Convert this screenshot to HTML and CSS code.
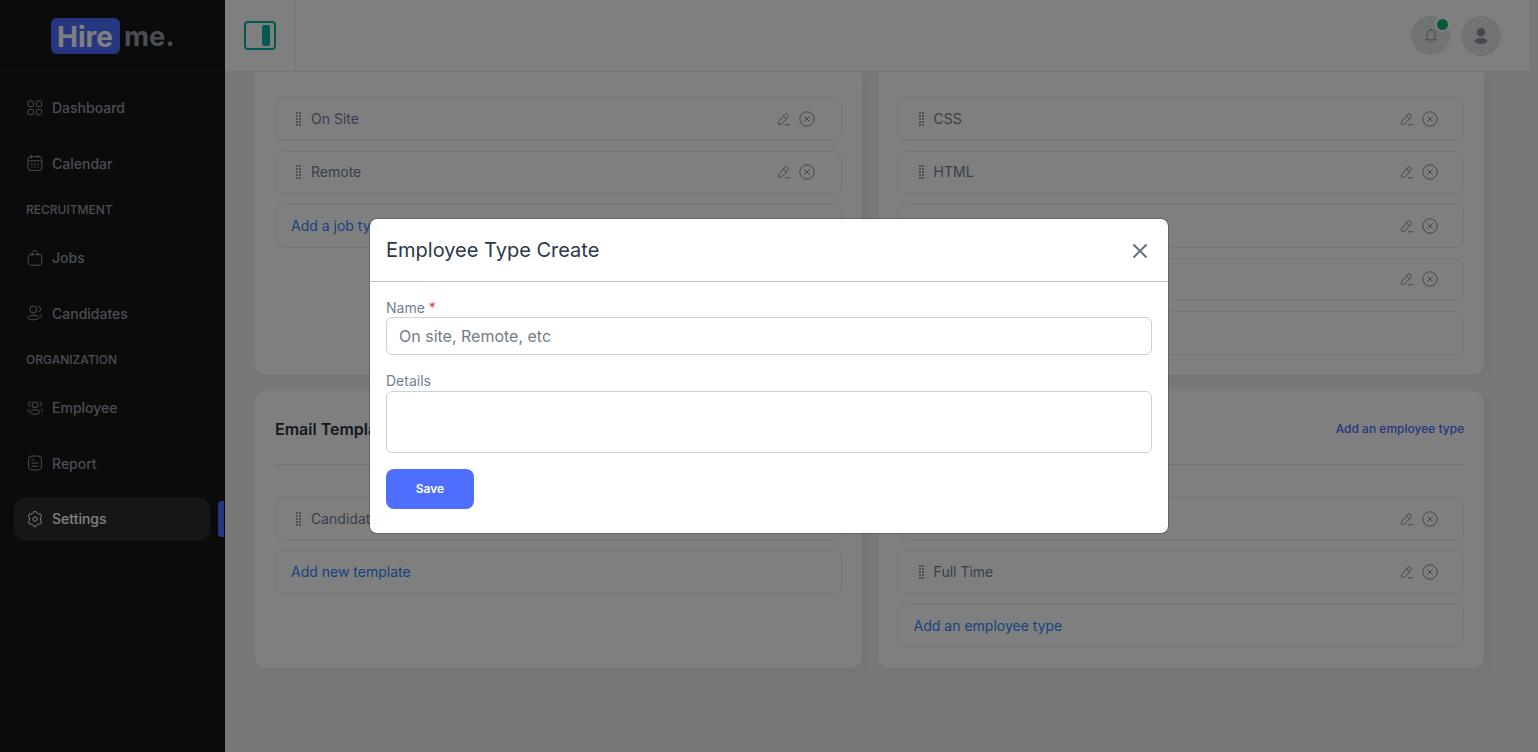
FILE: index.html
```html
<!DOCTYPE html>
<html lang="en">
<head>
<meta charset="utf-8">
<title>Hire me. - Settings</title>
<link rel="stylesheet" href="styles.css">
</head>
<body>
<svg class="sprite" aria-hidden="true">
  <symbol id="grip" viewBox="0 0 6 14"><path d="M0 0h2v2H0zM3 0h2v2H3zM0 3h2v2H0zM3 3h2v2H3zM0 6h2v2H0zM3 6h2v2H3zM0 9h2v2H0zM3 9h2v2H3zM0 12h2v2H0zM3 12h2v2H3z"/></symbol>
  <symbol id="edit" viewBox="0 0 14 14"><path d="M7.600 2.600 2.200 8.800c-.3.300-.5.800-.6 1.200l-.3 1.500c-.1.700.4 1.200 1.100 1.100l1.500-.3c.4-.1.900-.3 1.200-.6l5.600-6.200c.9-1.100.9-2.100-.1-3-1-.9-2.100-.9-3 .1zM6.700 3.700c.3 1.600 1.600 2.700 3.100 2.900M8 12.800h5"/></symbol>
  <symbol id="remove" viewBox="0 0 16 16"><circle cx="8" cy="8" r="7.200"/><path d="m5.200 5.200 5.600 5.600m0-5.600-5.600 5.600"/></symbol>
</svg>
<div class="app">
  <aside class="sidebar">
    <div class="brand"><span class="brand-box">Hire</span><span class="brand-rest">me.</span></div>
    <nav class="nav">
      <a class="nav-item"><svg viewBox="0 0 16 16"><rect x="1" y="1" width="5.400" height="5.400" rx="1.400"/><rect x="9.300" y="1" width="5.400" height="5.400" rx="1.400"/><rect x="1" y="9.300" width="5.400" height="5.400" rx="1.400"/><rect x="9.300" y="9.300" width="5.400" height="5.400" rx="1.400"/></svg>Dashboard</a>
      <a class="nav-item"><svg class="up" viewBox="0 0 16 16"><rect x="1" y="1.600" width="13.800" height="14" rx="3"/><path d="M1 5.800h13.600M4.600 0v3M11 0v3"/><path class="dots" d="M4 9.200h1.500M7 9.200h1.500M10 9.200h1.500M4 12h1.500M7 12h1.500M10 12h1.500"/></svg>Calendar</a>
      <div class="nav-label">RECRUITMENT</div>
      <a class="nav-item"><svg viewBox="0 0 16 16"><path d="M4.300 4.300h7.400c2 0 2.900 1.200 3 3l.2 4c.1 2.500-1 3.900-3.300 3.900H4.400c-2.300 0-3.400-1.400-3.300-3.900l.2-4c.1-1.800 1-3 3-3zM5 6V3.800C5 2 6.200.6 8 .6s3 1.400 3 3.200V6"/></svg>Jobs</a>
      <a class="nav-item"><svg class="up" viewBox="0 0 16 16"><circle cx="6.300" cy="4.500" r="3.500"/><ellipse cx="6.300" cy="12.500" rx="5.500" ry="2.300"/><path d="M11 1.400c3.300 0 3.300 5.200.4 5.400M13.300 10.100c2 .5 2 2.300.4 3.100"/></svg>Candidates</a>
      <div class="nav-label">ORGANIZATION</div>
      <a class="nav-item"><svg viewBox="0 0 16 16"><circle cx="8" cy="4.900" r="3"/><ellipse cx="8" cy="12" rx="4.800" ry="2.200"/><path d="M3.800 2.100C.9 1.700.7 6.200 3.600 6.400M12.200 2.100c2.900-.4 3.100 4.100.2 4.300M2 9c-1.700.5-1.800 2.300-.4 2.900M14 9c1.700.5 1.800 2.300.4 2.900"/></svg>Employee</a>
      <a class="nav-item"><svg class="up" viewBox="0 0 16 16"><rect x="1.500" y="1" width="13" height="14" rx="3.600"/><path d="M4.500 4.900H7M4.500 8.100h6.800M4.500 11.200h6.800"/></svg>Report</a>
      <a class="nav-item active"><svg viewBox="0 0 16 16"><path d="M6.900.6h2.200c.5 1.900 2.100 2.800 4.200 2.200l1.300 2.200c-1.500 1.300-1.500 4.700 0 6l-1.300 2.200c-2.100-.6-3.700.3-4.200 2.200H6.900c-.5-1.900-2.100-2.800-4.200-2.200L1.400 11c1.500-1.300 1.500-4.700 0-6l1.300-2.200c2.100.6 3.700-.3 4.200-2.200z" stroke-linejoin="round"/><circle cx="8" cy="8" r="2.200"/></svg>Settings</a>
    </nav>
  </aside>
  <div class="page">
    <header class="topbar">
      <button class="toggle" aria-label="Toggle sidebar"><span></span></button>
      <div class="user-tools">
        <div class="circle bell"><svg viewBox="0 0 14 16"><path d="M1.200 11.800h11.600M2.300 11.600c.7-1.200.7-2.500.7-5C3 3.700 4.500 2 7 2s4 1.700 4 4.600c0 2.500 0 3.800.7 5M7 .8V2"/><path class="solid" d="M5.600 13.200h2.800c0 1.500-2.800 1.500-2.800 0z"/></svg><i class="badge"></i></div>
        <div class="circle avatar"><svg viewBox="0 0 14 16"><circle cx="7" cy="4.300" r="4.200"/><ellipse cx="7" cy="13" rx="6.400" ry="2.900"/></svg></div>
      </div>
    </header>
    <main class="boards">
      <section class="card card-upper">
        <div class="row"><svg class="grip"><use href="#grip"/></svg><span>On Site</span><svg class="edit"><use href="#edit"/></svg><svg class="remove"><use href="#remove"/></svg></div>
        <div class="row"><svg class="grip"><use href="#grip"/></svg><span>Remote</span><svg class="edit"><use href="#edit"/></svg><svg class="remove"><use href="#remove"/></svg></div>
        <a class="row add">Add a job type</a>
      </section>
      <section class="card card-upper">
        <div class="row"><svg class="grip"><use href="#grip"/></svg><span>CSS</span><svg class="edit"><use href="#edit"/></svg><svg class="remove"><use href="#remove"/></svg></div>
        <div class="row"><svg class="grip"><use href="#grip"/></svg><span>HTML</span><svg class="edit"><use href="#edit"/></svg><svg class="remove"><use href="#remove"/></svg></div>
        <div class="row"><span></span><svg class="edit"><use href="#edit"/></svg><svg class="remove"><use href="#remove"/></svg></div>
        <div class="row"><span></span><svg class="edit"><use href="#edit"/></svg><svg class="remove"><use href="#remove"/></svg></div>
        <div class="row"></div>
      </section>
      <section class="card">
        <div class="card-head"><h2>Email Templates</h2></div>
        <div class="row"><svg class="grip"><use href="#grip"/></svg><span>Candidate</span></div>
        <a class="row add">Add new template</a>
      </section>
      <section class="card">
        <div class="card-head"><a>Add an employee type</a></div>
        <div class="row"><span></span><svg class="edit"><use href="#edit"/></svg><svg class="remove"><use href="#remove"/></svg></div>
        <div class="row"><svg class="grip"><use href="#grip"/></svg><span>Full Time</span><svg class="edit"><use href="#edit"/></svg><svg class="remove"><use href="#remove"/></svg></div>
        <a class="row add">Add an employee type</a>
      </section>
    </main>
  </div>
</div>
<div class="backdrop">
  <div class="modal" role="dialog" aria-labelledby="modal-title">
    <div class="modal-head">
      <h1 id="modal-title">Employee Type Create</h1>
      <svg viewBox="0 0 16 16"><path d="m1.500 1.500 13 13m0-13-13 13"/></svg>
    </div>
    <form class="modal-body">
      <label for="name">Name <b>*</b></label>
      <input id="name" type="text" placeholder="On site, Remote, etc">
      <label class="details-label" for="details">Details</label>
      <textarea id="details"></textarea>
      <button type="button">Save</button>
    </form>
  </div>
</div>
</body>
</html>
```

FILE: styles.css
```css
* { box-sizing: border-box; }
body { margin: 0; height: 752px; overflow: hidden; background: #f1f1f1; font-family: Inter, "Liberation Sans", sans-serif; }
svg { fill: none; stroke: currentColor; flex: none; }
.sprite { position: absolute; width: 0; height: 0; }
h1, h2 { margin: 0; }
.app { display: flex; height: 752px; }

.sidebar { width: 225px; flex: none; background: #161616; color: #949ba8; }
.brand { height: 72px; border-bottom: 1px solid #242424; padding: 1px 0 0 50.500px; display: flex; align-items: center; gap: 4.500px; font-size: 28px; font-weight: 700; }
.brand-box { width: 69px; height: 36px; line-height: 38px; text-align: center; border-radius: 6px; background: #4d6eff; color: #fff; }
.brand-rest { line-height: 36px; padding-bottom: 1px; font-size: 27.500px; }
.nav { padding: 14px 15px 0 14px; display: flex; flex-direction: column; }
.nav-item { position: relative; height: 44px; margin-bottom: 12px; padding: 0 0 1px 13px; display: flex; align-items: center; gap: 9px; font-size: 14px; font-weight: 500; border-radius: 12px; }
.nav-item svg { width: 16px; height: 16px; stroke-width: 1; }
.nav-item .up { margin-bottom: 2px; }
.nav-label { height: 14px; line-height: 14px; margin: 5px 0 19px; padding-left: 12px; font-size: 12px; font-weight: 500; }
.dots { stroke-width: 1.200; }
.nav-item.active { background: #2b2d30; color: #fff; margin-top: -1px; }
.nav-item.active::after { content: ""; position: absolute; left: 204px; top: 4px; width: 6px; height: 36px; border-radius: 4px 0 0 4px; background: #4d6eff; }

.page { flex: 1; min-width: 0; }
.topbar { width: 1305px; height: 72px; background: #fff; border-bottom: 1px solid #ececec; display: flex; justify-content: space-between; }
.toggle { width: 71px; height: 71px; padding: 0 0 0 19px; border: 0; border-right: 1px solid #ececec; background: none; display: flex; align-items: center; }
.toggle span { width: 32px; height: 29px; border: 2px solid #00b8a5; border-radius: 4px; padding: 2px 4px; display: flex; justify-content: flex-end; }
.toggle span::after { content: ""; width: 8px; height: 21px; border-radius: 2px; background: #00b8a5; }
.user-tools { display: flex; align-items: center; gap: 11px; padding-right: 29px; }
.circle { position: relative; width: 40px; height: 40px; border-radius: 50%; background: #e2e6ea; color: #8b93a3; display: flex; align-items: center; justify-content: center; }
.bell { width: 39px; height: 39px; }
.circle svg { width: 14px; height: 16px; }
.avatar svg, .solid { fill: currentColor; stroke: none; }
.badge { position: absolute; left: 23.500px; top: .5px; width: 15px; height: 15px; border-radius: 50%; border: 2px solid #fff; background: #12b76a; }

.boards { display: grid; grid-template-columns: 606.600px 606.600px; grid-template-rows: 303.400px 276.600px; gap: 15.600px 16px; padding-left: 30px; }
.card { padding: 20px; border-radius: 12px; background: #fff; box-shadow: 5px 5px 10px rgba(200, 204, 216, .22); display: flex; flex-direction: column; gap: 10px; }
.card-upper { padding-top: 25px; border-radius: 0 0 12px 12px; }
.card-head { height: 54px; margin-bottom: 22px; padding-bottom: 17px; border-bottom: 1px solid #e6e6e6; display: flex; align-items: center; }
.card-head h2 { color: #2a313c; font-size: 16px; font-weight: 600; }
.card-head a { margin-left: auto; color: #4d6eff; font-size: 12px; font-weight: 500; }
.row { height: 43.500px; border: 1px solid #eee; border-radius: 8px; padding: 0 25.500px 0 20px; display: flex; align-items: center; font-size: 14px; color: #718096; }
.row span { flex: 1; padding-bottom: 1px; }
.row.add { padding: 0 15px 1px; color: #2f86fb; }
.grip { width: 6px; height: 14px; margin-right: 9px; fill: #99a0ac; stroke: none; }
.edit, .remove { color: #858da0; }
.edit { width: 14px; height: 14px; margin-right: 8px; }
.remove { width: 16px; height: 16px; }

.backdrop { position: absolute; inset: 0; background: rgba(0, 0, 0, .5); display: flex; align-items: center; justify-content: center; }
.modal { width: 800px; height: 316px; background: #fff; background-clip: padding-box; border: 1px solid rgba(0, 0, 0, .2); border-radius: 8px; }
.modal-head { height: 63px; padding: 0 20px 0 16px; border-bottom: 1px solid #bfbfbf; display: flex; align-items: center; justify-content: space-between; color: #64708a; }
.modal-head h1 { color: #2d3748; font-size: 20px; font-weight: 400; }
.modal-head svg { width: 16px; height: 16px; margin-top: 2px; stroke-width: 2; }
.modal-body { padding: 15px 16px 16px; display: flex; flex-direction: column; }
.modal-body label { height: 20px; line-height: 21px; font-size: 14px; color: #718096; }
.modal-body .details-label { line-height: 19px; }
.modal-body b { color: #e53e3e; font-weight: 400; }
.modal-body input, .modal-body textarea { border: 1px solid #cdd2d9; border-radius: 6px; background: #fff; font: 16px Inter, sans-serif; padding: 0 12px; resize: none; }
.modal-body input { height: 38px; margin-bottom: 16px; }
.modal-body input::placeholder { color: #757b85; opacity: 1; }
.modal-body textarea { height: 62px; margin-bottom: 16px; }
.modal-body button { width: 88px; height: 40px; padding: 0 0 1px; border: 0; border-radius: 8px; background: #4d6eff; color: #fff; font: 600 12px Inter, sans-serif; }
```
